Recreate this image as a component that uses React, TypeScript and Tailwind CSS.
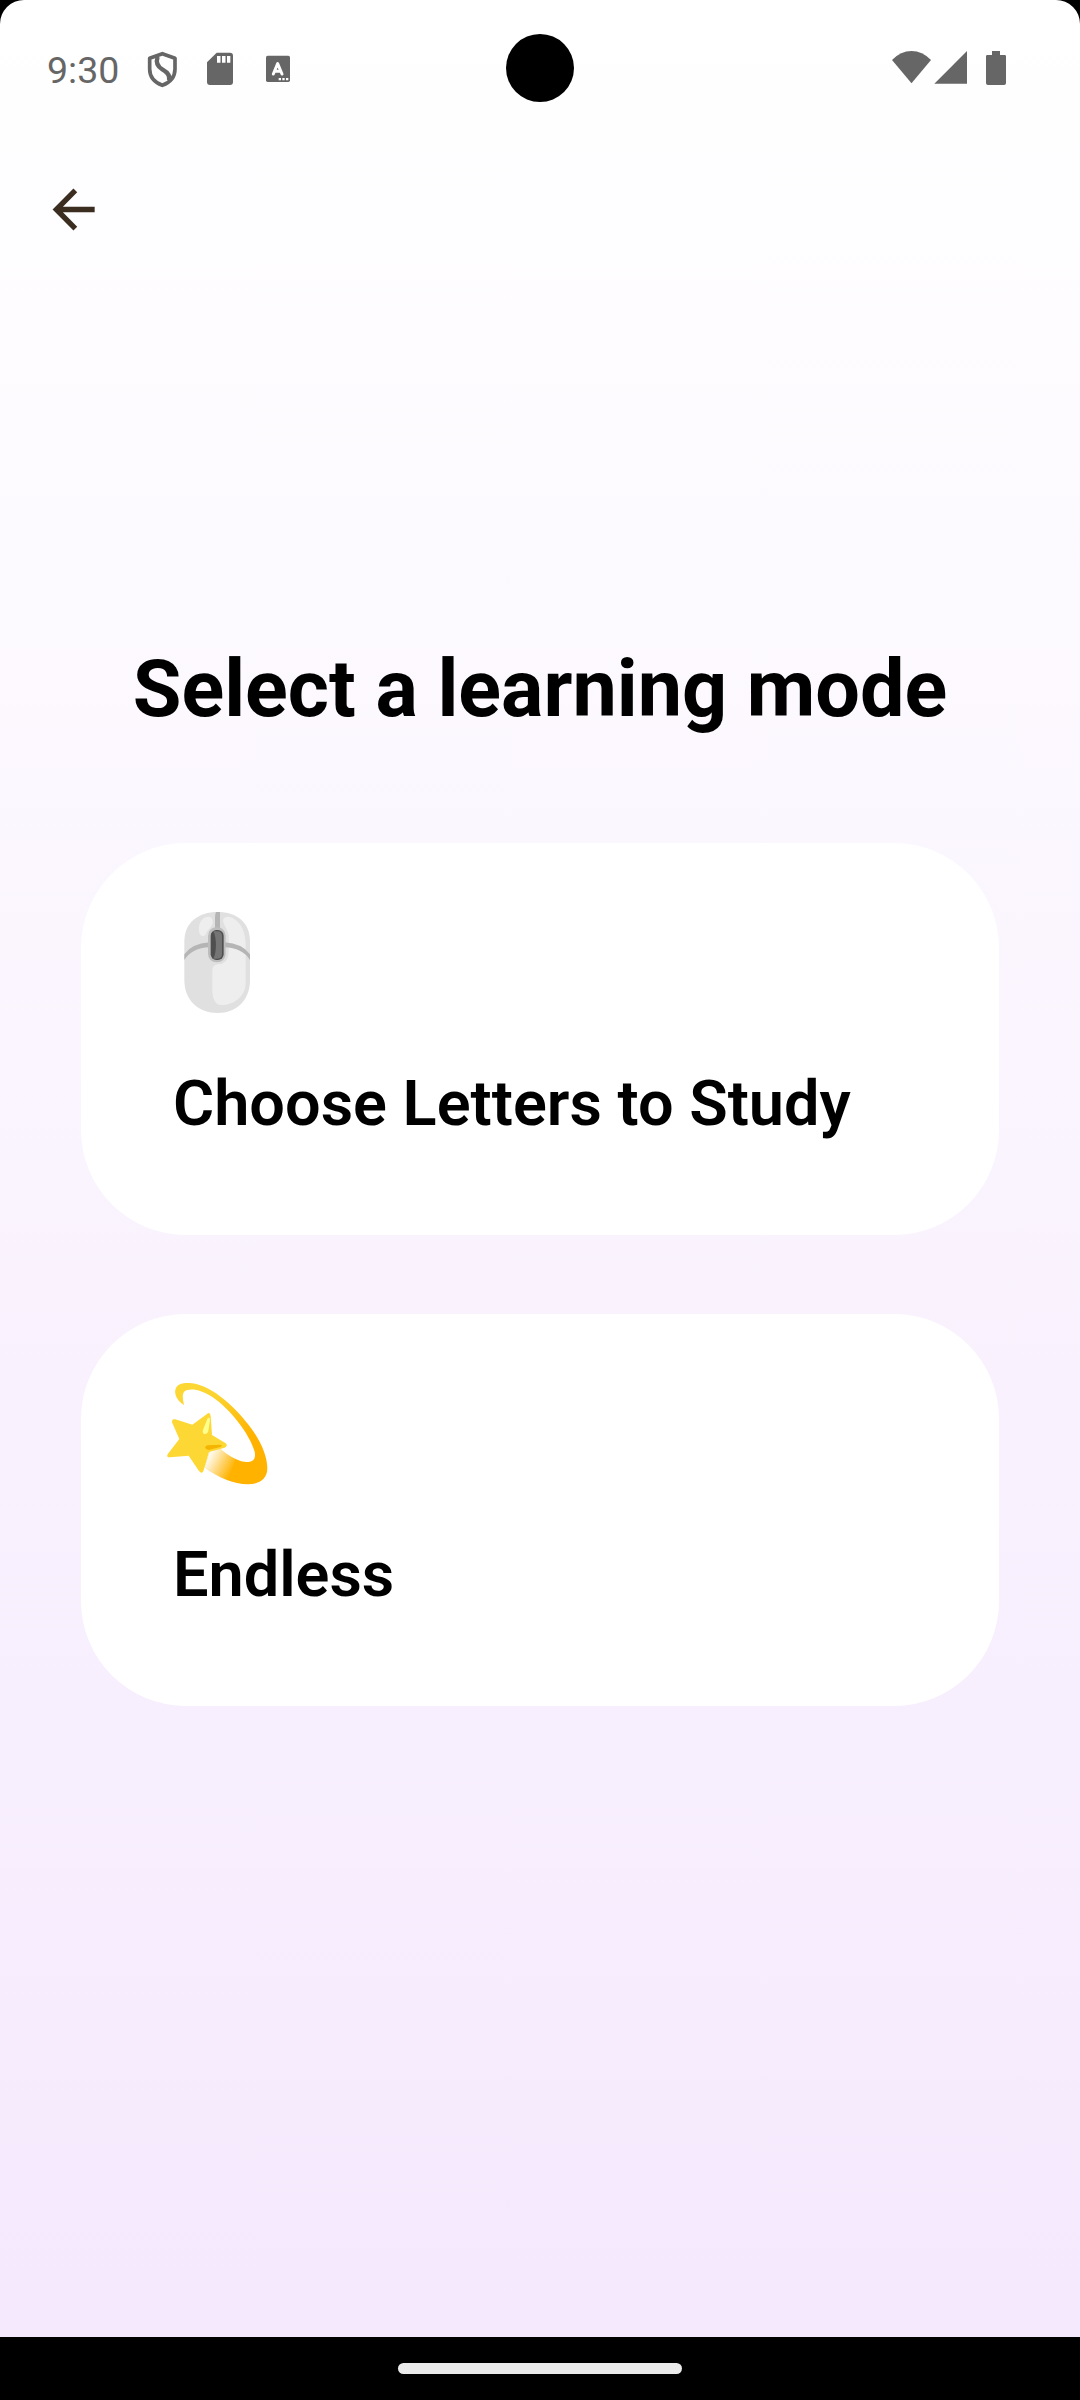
import type { ReactNode } from "react";

type ModeCardProps = {
  icon: ReactNode;
  title: string;
};

function ShieldIcon() {
  return (
    <svg viewBox="435 144 105 120" className="h-10 w-[35px]" fill="none" stroke="#666" strokeWidth="11" strokeLinejoin="round">
      <path d="M487 161 L525 175 V207 C525 231 511 247 487 256 C463 247 449 231 449 207 V175 Z" />
      <path d="M473 170 C467 187 472 199 487 208 C503 217 512 226 507 241" strokeWidth="13" />
    </svg>
  );
}

function SdCardIcon() {
  return (
    <svg viewBox="615 144 90 120" className="h-10 w-[30px]">
      <path d="M650 158 H690 Q699 158 699 167 V246 Q699 255 690 255 H630 Q621 255 621 246 V187 Z" fill="#666" />
      <path d="M651 168h10.500v20h-10.500zM666 168h10.500v20h-10.500zM681 168h10v20h-10z" fill="#fff" />
    </svg>
  );
}

function KeyboardIcon() {
  return (
    <svg viewBox="792 144 84 120" className="h-10 w-7">
      <rect x="798" y="167" width="72" height="79" rx="5" fill="#666" />
      <path d="M820 222 L833 191 L846 222 M825 214 H841" fill="none" stroke="#fff" strokeWidth="9" strokeLinecap="round" strokeLinejoin="round" />
      <path d="M836 234h7v7h-7zM847 234h7v7h-7zM858 234h7v7h-7z" fill="#fff" />
    </svg>
  );
}

function StatusBar() {
  return (
    <div className="relative flex h-[136px] items-center pr-[72px] pl-[47px]">
      <span className="w-[98px] pt-[5px] text-[37.500px] leading-none text-[#666]">9:30</span>
      <ShieldIcon />
      <div className="ml-[25px] flex gap-[29px]">
        <SdCardIcon />
        <KeyboardIcon />
      </div>
      <div className="absolute top-[34px] left-[506px] h-[68px] w-[68px] rounded-full bg-black" />
      <div className="ml-auto flex">
        <svg viewBox="90 84 129 120" className="h-10 w-[43px]" fill="#666">
          <path d="M154.500 190 L96 120 Q122 93 154.500 93 Q187 93 213 120 Z" />
        </svg>
        <svg viewBox="219 84 108 120" className="h-10 w-9" fill="#666">
          <path d="M321 93 V191 H223 Z" />
        </svg>
        <svg viewBox="372 84 72 120" className="ml-[15px] h-10 w-6" fill="#666">
          <path d="M396 93 H420 V105 H434 Q438 105 438 109 V189 Q438 195 432 195 H384 Q378 195 378 189 V109 Q378 105 382 105 H396 Z" />
        </svg>
      </div>
    </div>
  );
}

function MouseIcon() {
  return (
    <svg viewBox="0 0 420 420" className="h-[140px] w-[140px]">
      <path d="M203 66 C262 66 300 98 300 155 V270 C300 332 258 369 203 369 C146 369 103 332 103 270 V155 C103 98 144 66 203 66 Z" fill="#e0e0e0" />
      <path d="M219 91 C221 79 234 77 248 84 C274 98 287 127 287 166 V278 C287 315 256 345 214 345 C197 345 187 327 187 300 V246 C187 229 192 223 209 223 C230 219 236 203 236 180 V137 C234 118 222 111 219 91 Z" fill="#eee" />
      <path d="M166 82 C181 76 190 84 188 99 C186 111 173 119 169 129 C165 141 154 141 149 131 C143 117 148 89 166 82 Z" fill="#eee" />
      <path d="M196 66 H210 V120 H195 V82 Q195 72 198 66 Z" fill="#b5b5b5" />
      <path d="M103 210 V193 Q125 161 178 157 V172 Q126 174 103 210 Z M300 210 V193 Q278 161 223 157 V172 Q277 174 300 210 Z" fill="#b5b5b5" />
      <rect x="174" y="112" width="53" height="105" rx="25" fill="#bdbdbd" />
      <rect x="182" y="120" width="39" height="90" rx="17" fill="#4f4f4f" />
      <path d="M190 124 H202 Q216 124 216 138 V192 Q216 206 202 206 H190 C200 190 201 144 190 124 Z" fill="#757575" />
    </svg>
  );
}

function DizzyIcon() {
  return (
    <svg viewBox="0 3 420 420" className="h-[140px] w-[140px]">
      <defs>
        <linearGradient id="trail" x1="85" y1="80" x2="310" y2="330" gradientUnits="userSpaceOnUse">
          <stop offset="0" stopColor="#fdd835" />
          <stop offset="0.3" stopColor="#fbd32e" />
          <stop offset="0.75" stopColor="#ffb300" />
        </linearGradient>
        <linearGradient id="trailFade" x1="173" y1="285" x2="250" y2="325" gradientUnits="userSpaceOnUse">
          <stop offset="0" stopColor="#fff" />
          <stop offset="1" stopColor="#fff" stopOpacity="0" />
        </linearGradient>
      </defs>
      <path
        d="M102 135 C83 123 71 103 77 86 C83 71 102 67 127 70 C190 79 260 145 305 207 C336 250 352 293 352 325 C352 355 330 373 294 373 C251 373 201 352 164 321 L181 270 L211 267 C240 292 270 306 291 306 C311 306 318 295 314 275 C300 224 241 147 187 111 C157 91 128 84 109 91 C94 97 98 114 102 135 Z"
        fill="url(#trail)"
      />
      <path d="M164 321 L181 270 L211 267 C225 280 240 289 256 297 L236 363 C210 353 184 338 164 321 Z" fill="url(#trailFade)" />
      <path
        d="M170 163 Q180 153 182 168 L186 225 L226 249 Q236 257 224 263 L177 276 L160 334 Q155 343 147 333 L116 287 L60 292 Q47 292 54 281 L88 237 L66 187 Q65 175 76 178 L127 194 Z"
        fill="#fdd835"
      />
      <path d="M172 177 Q179 168 180 180 L175 213 Q172 223 163 222 Q156 219 159 210 Z" fill="#ffff8d" />
      <path d="M172 256 L210 254 Q221 256 211 261 L176 270 Q166 268 166 262 Q167 257 172 256 Z" fill="#f4b400" />
    </svg>
  );
}

function ModeCard({ icon, title }: ModeCardProps) {
  return (
    <button className="flex h-[392px] w-full flex-col items-start rounded-[105px] bg-white pt-[47px] pl-[69px] text-left">
      {icon}
      <span className="mt-[37px] ml-[23px] text-[63px] leading-[74px] font-semibold whitespace-nowrap">{title}</span>
    </button>
  );
}

export default function App() {
  return (
    <div className="flex h-[2400px] w-[1080px] flex-col bg-black font-['Roboto',sans-serif] text-black">
      <div className="flex h-[2337px] flex-col rounded-t-[24px] bg-linear-to-b from-white to-[#f5e9fd]">
        <StatusBar />

        <header className="flex pt-[34px] pl-[30px]">
          <button aria-label="Back">
            <svg viewBox="0 0 270 240" className="h-20 w-[90px]" fill="none" stroke="#3b2d20" strokeWidth="16">
              <path d="M136 61 L79 118.500 L136 176 M79 118.500 H194" />
            </svg>
          </button>
        </header>

        <main className="flex flex-col px-[81px] pt-[393px]">
          <h1 className="text-center text-[79.100px] leading-[92px] font-bold whitespace-nowrap">Select a learning mode</h1>
          <div className="mt-[108px] flex flex-col gap-[79px]">
            <ModeCard icon={<MouseIcon />} title="Choose Letters to Study" />
            <ModeCard icon={<DizzyIcon />} title="Endless" />
          </div>
        </main>
      </div>

      <footer className="flex h-[63px] justify-center pt-[26px]">
        <div className="h-[11px] w-[284px] rounded-full bg-[#ebebeb]" />
      </footer>
    </div>
  );
}
